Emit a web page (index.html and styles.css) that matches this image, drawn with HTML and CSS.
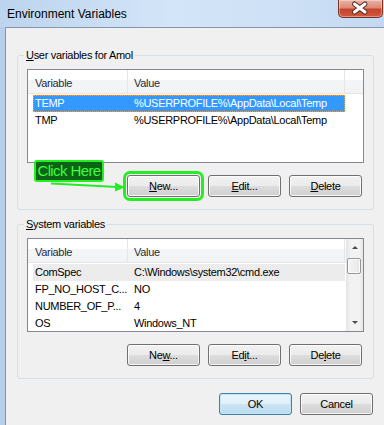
FILE: index.html
```html
<!DOCTYPE html>
<html>
<head>
    <meta charset="UTF-8">
    <title>Environment Variables</title>
    <link rel="stylesheet" href="styles.css">
</head>
<body>
<div class="window">
    <div class="titlebar">
        <span class="title">Environment Variables</span>
        <button class="close" aria-label="Close">
            <svg width="45" height="18" viewBox="0 0 45 18">
                <path d="M17.5 4 L28 12 M28 4 L17.5 12" stroke="#5a2a22" stroke-width="5" stroke-linecap="round"/>
                <path d="M17.5 4 L28 12 M28 4 L17.5 12" stroke="#ffffff" stroke-width="3" stroke-linecap="round"/>
            </svg>
        </button>
    </div>
    <div class="client">
        <fieldset class="group">
            <legend><u>U</u>ser variables for Amol</legend>
            <div class="list">
                <div class="list-main">
                    <div class="list-head">
                        <span class="col-name">Variable</span>
                        <span class="col-value">Value</span>
                        <span class="col-fill"></span>
                    </div>
                    <div class="list-body">
                        <div class="row selected"><span class="cell-name">TEMP</span><span class="cell-value">%USERPROFILE%\AppData\Local\Temp</span></div>
                        <div class="row"><span class="cell-name">TMP</span><span class="cell-value">%USERPROFILE%\AppData\Local\Temp</span></div>
                    </div>
                </div>
            </div>
            <div class="buttons">
                <div class="callout">Click Here</div>
                <svg class="arrow" width="80" height="14" viewBox="0 0 80 14">
                    <path d="M4 3.5 L70 7" stroke="#22ee22" stroke-width="2"/>
                    <polygon points="68,2.5 78,7.2 68,11.5" fill="#22ee22"/>
                </svg>
                <button class="btn highlight"><u>N</u>ew...</button>
                <button class="btn"><u>E</u>dit...</button>
                <button class="btn"><u>D</u>elete</button>
            </div>
        </fieldset>

        <fieldset class="group second">
            <legend><u>S</u>ystem variables</legend>
            <div class="list">
                <div class="list-main">
                    <div class="list-head">
                        <span class="col-name">Variable</span>
                        <span class="col-value">Value</span>
                    </div>
                    <div class="list-body">
                        <div class="row hover"><span class="cell-name">ComSpec</span><span class="cell-value">C:\Windows\system32\cmd.exe</span></div>
                        <div class="row"><span class="cell-name">FP_NO_HOST_C...</span><span class="cell-value">NO</span></div>
                        <div class="row"><span class="cell-name">NUMBER_OF_P...</span><span class="cell-value">4</span></div>
                        <div class="row"><span class="cell-name">OS</span><span class="cell-value">Windows_NT</span></div>
                    </div>
                </div>
                <div class="scrollbar">
                    <div class="sb-btn"><span class="tri-up"></span></div>
                    <div class="sb-thumb"></div>
                    <div class="sb-track"></div>
                    <div class="sb-btn"><span class="tri-down"></span></div>
                </div>
            </div>
            <div class="buttons">
                <button class="btn">Ne<u>w</u>...</button>
                <button class="btn">Ed<u>i</u>t...</button>
                <button class="btn">De<u>l</u>ete</button>
            </div>
        </fieldset>

        <div class="footer">
            <button class="btn default">OK</button>
            <button class="btn">Cancel</button>
        </div>
    </div>
</div>
</body>
</html>
```

FILE: styles.css
```css
body {
    margin: 0;
    font-family: "Liberation Sans", Arial, sans-serif;
    font-size: 11px;
    letter-spacing: -0.3px;
    color: #000;
}
.window {
    width: 384px;
    height: 425px;
    overflow: hidden;
    background: #b7cfea;
    display: flex;
    flex-direction: column;
}

/* title bar */
.titlebar {
    height: 27px;
    flex: none;
    display: flex;
    justify-content: space-between;
    align-items: flex-start;
    background: linear-gradient(90deg, #bcd4ee 0%, #d3e5f8 45%, #cde0f5 75%, #c3d9f2 100%);
}
.title {
    font-size: 12px;
    letter-spacing: 0;
    line-height: 15px;
    padding: 7px 0 0 7px;
}
.close {
    width: 45px;
    height: 18px;
    margin-right: 1px;
    padding: 0;
    border: 1px solid #7b3226;
    border-top: none;
    border-radius: 0 0 5px 5px;
    background: linear-gradient(#eab2a4 0%, #dc8a76 45%, #c6432c 55%, #cf5a3f 100%);
    box-shadow: inset 0 0 0 1px rgba(255,255,255,0.35);
    display: flex;
    align-items: center;
    justify-content: center;
}
.close svg {
    display: block;
    margin-left: -2px;
}

/* dialog client area */
.client {
    flex: 1;
    margin-left: 5px;
    border-left: 1px solid #8596a8;
    border-top: 1px solid #8596a8;
    background: #f0f0f0;
    padding: 20px 10px 0 11px;
}
.group {
    margin: 0;
    padding: 6px 9px 12px 9px;
    border: 1px solid #d5dfe5;
    border-radius: 3px;
    min-width: 0;
}
.group.second {
    margin-top: 7px;
}
.group legend {
    padding: 0 2px;
    margin-left: -3px;
    line-height: 15px;
}

/* list view */
.list {
    height: 94px;
    box-sizing: border-box;
    border: 1px solid #828790;
    background: #fff;
    display: flex;
}
.list-main {
    flex: 1;
    display: flex;
    flex-direction: column;
}
.list-head {
    height: 24px;
    box-sizing: border-box;
    display: flex;
    border-bottom: 1px solid #e5e5e5;
    background: linear-gradient(#ffffff 0%, #ffffff 45%, #f4f5f7 45%, #f2f3f5 100%);
    color: #1f2d3d;
}
.list-head span {
    box-sizing: border-box;
    line-height: 24px;
    padding-top: 1px;
    border-right: 1px solid #e3e6ea;
}
.col-name {
    width: 100px;
    padding-left: 7px;
}
.col-value {
    width: 217px;
    padding-left: 6px;
}
.col-fill {
    flex: 1;
    border-right: none !important;
}
.list-body {
    padding-top: 1px;
}
.row {
    display: flex;
    width: 312px;
    height: 17px;
    margin-left: 5px;
    line-height: 17px;
    white-space: nowrap;
}
.row span {
    padding-left: 2px;
}
.cell-name {
    width: 97px;
}
.row.selected {
    background: #3399ff;
    color: #fff;
    outline: 1px dotted #f0a04a;
    outline-offset: -1px;
}
.row.hover {
    background: #ececec;
}

/* scrollbar */
.scrollbar {
    width: 17px;
    flex: none;
    display: flex;
    flex-direction: column;
    background: linear-gradient(90deg, #e4e4e4 0%, #f2f2f2 25%, #f2f2f2 80%, #e6e6e6 100%);
}
.sb-btn {
    height: 17px;
    display: flex;
    align-items: center;
    justify-content: center;
}
.tri-up {
    width: 0;
    border-left: 3px solid transparent;
    border-right: 3px solid transparent;
    border-bottom: 3px solid #4a4a4a;
}
.tri-down {
    width: 0;
    border-left: 3px solid transparent;
    border-right: 3px solid transparent;
    border-top: 3px solid #4a4a4a;
}
.sb-thumb {
    height: 16px;
    margin: 2px 2px 0 1px;
    box-sizing: border-box;
    border: 1px solid #979797;
    border-radius: 2px;
    background: linear-gradient(90deg, #f5f5f5, #e6e6e6);
    box-shadow: inset 0 0 0 1px #fbfbfb;
}
.sb-track {
    flex: 1;
}

/* buttons */
.buttons {
    position: relative;
    display: flex;
    justify-content: flex-end;
    gap: 8px;
    margin-top: 12px;
    padding-right: 2px;
}
.footer {
    display: flex;
    justify-content: flex-end;
    gap: 8px;
    margin-top: 14px;
    padding-right: 1px;
}
.btn {
    width: 73px;
    height: 22px;
    padding: 0;
    font: inherit;
    letter-spacing: inherit;
    color: #000;
    border: 1px solid #707070;
    border-radius: 3px;
    background: linear-gradient(#f2f2f2 0%, #ebebeb 48%, #dddddd 52%, #cfcfcf 100%);
    box-shadow: inset 0 0 0 1px rgba(255,255,255,0.8);
}
.btn u {
    text-decoration-thickness: 1px;
}
.btn.default {
    border-color: #3c7fb1;
    background: linear-gradient(#eaf6fd 0%, #e1f0f9 48%, #cbe4f3 52%, #bddcee 100%);
    box-shadow: inset 0 0 0 1px #c4e5f6;
}
.btn.highlight {
    outline: 3px solid #22ee22;
    outline-offset: 1px;
}

/* annotation */
.callout {
    position: absolute;
    left: 7px;
    top: -15px;
    width: 70px;
    height: 22px;
    box-sizing: border-box;
    border: 2px solid #22ee22;
    border-radius: 3px;
    background: #0b6316;
    color: #3aff3a;
    font-size: 15px;
    letter-spacing: -0.6px;
    line-height: 18px;
    text-align: center;
    z-index: 2;
}
.arrow {
    position: absolute;
    left: 20px;
    top: 5px;
    z-index: 2;
}
```
